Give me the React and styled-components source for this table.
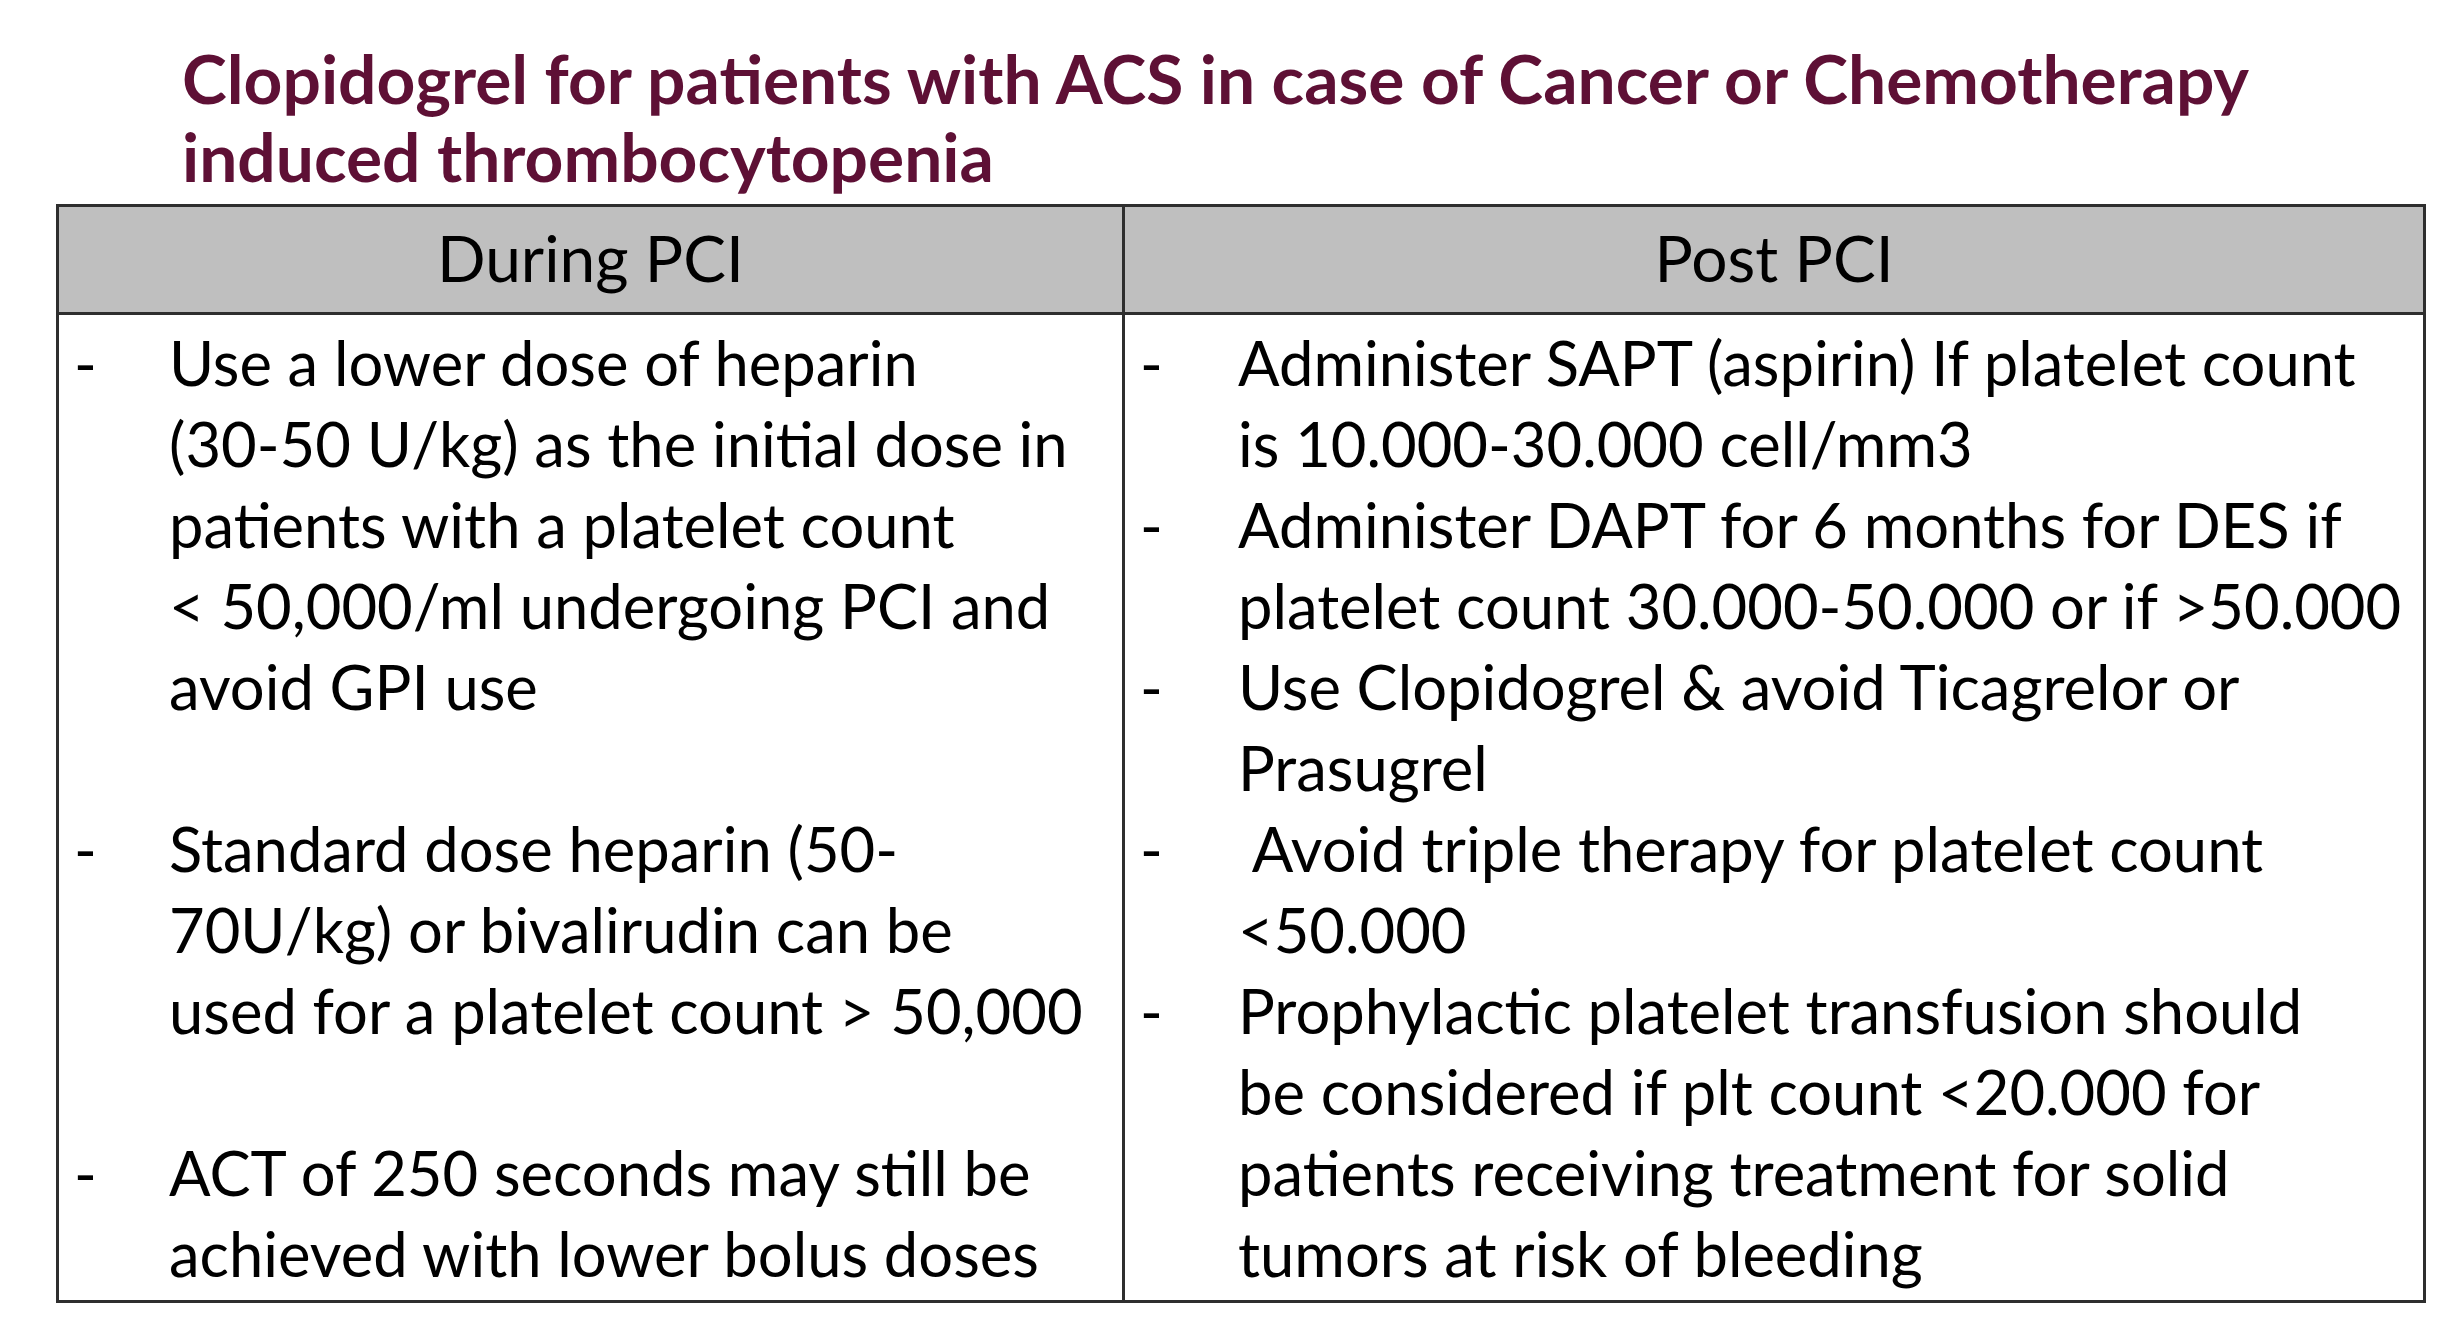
import React from "react";
import styled, { createGlobalStyle } from "styled-components";

const Global = createGlobalStyle`
  html, body { margin: 0; padding: 0; background: #ffffff; }
  body { font-family: Lato, "Liberation Sans", sans-serif; color: #000; }
`;

const Page = styled.div`
  width: 2440px;
  height: 1335px;
  box-sizing: border-box;
  padding-top: 39px;
  overflow: hidden;
`;

const Title = styled.h1`
  margin: 0 0 9px 182px;
  font-family: Lato, "Liberation Sans", sans-serif;
  font-weight: 700;
  font-size: 67.7px;
  line-height: 78px;
  color: #5e1035;
  white-space: nowrap;
`;

const Table = styled.div`
  margin-left: 56px;
  width: 2370px;
  box-sizing: border-box;
  border: 3px solid #2e2e2e;
  display: grid;
  grid-template-columns: 1066px 1fr;
`;

const HeadCell = styled.div`
  height: 102px;
  background: #bfbfbf;
  border-bottom: 3px solid #2e2e2e;
  border-right: ${(p) => (p.$last ? "none" : "3px solid #2e2e2e")};
  display: flex;
  align-items: center;
  justify-content: center;
  font-size: 64px;
  line-height: 1;
  padding-bottom: 3px;
  box-sizing: content-box;
`;

const BodyCell = styled.div`
  border-right: ${(p) => (p.$last ? "none" : "3px solid #2e2e2e")};
  padding: 7px 0 6px 0;
  font-size: 61.5px;
  line-height: 81px;
`;

const Item = styled.div`
  display: flex;
`;

const Dash = styled.span`
  flex: none;
  width: ${(p) => p.$indent - 15}px;
  padding-left: 15px;
`;

const Lines = styled.div`
  display: flex;
  flex-direction: column;
`;

const Line = styled.span`
  white-space: pre;
`;

const Blank = styled.div`
  height: 81px;
`;

const leftItems = [
  ["Use a lower dose of heparin", "(30-50 U/kg) as the initial dose in", "patients with a platelet count", "< 50,000/ml undergoing PCI and", "avoid GPI use"],
  null,
  ["Standard dose heparin (50-", "70U/kg) or bivalirudin can be", "used for a platelet count > 50,000"],
  null,
  ["ACT of 250 seconds may still be", "achieved with lower bolus doses"],
];

const rightItems = [
  ["Administer SAPT (aspirin) If platelet count", "is 10.000-30.000 cell/mm3"],
  ["Administer DAPT for 6 months for DES if", "platelet count 30.000-50.000 or if >50.000"],
  ["Use Clopidogrel & avoid Ticagrelor or", "Prasugrel"],
  [" Avoid triple therapy for platelet count", "<50.000"],
  ["Prophylactic platelet transfusion should", "be considered if plt count <20.000 for", "patients receiving treatment for solid", "tumors at risk of bleeding"],
];

function Column({ items, indent, last }) {
  return (
    <BodyCell $last={last}>
      {items.map((lines, i) =>
        lines ? (
          <Item key={i}>
            <Dash $indent={indent}>-</Dash>
            <Lines>
              {lines.map((l, j) => (
                <Line key={j}>{l}</Line>
              ))}
            </Lines>
          </Item>
        ) : (
          <Blank key={i} />
        )
      )}
    </BodyCell>
  );
}

export default function App() {
  return (
    <>
      <Global />
      <Page>
        <Title>
          Clopidogrel for patients with ACS in case of Cancer or Chemotherapy
          <br />
          induced thrombocytopenia
        </Title>
        <Table>
          <HeadCell>During PCI</HeadCell>
          <HeadCell $last>Post PCI</HeadCell>
          <Column items={leftItems} indent={110} />
          <Column items={rightItems} indent={113} last />
        </Table>
      </Page>
    </>
  );
}
